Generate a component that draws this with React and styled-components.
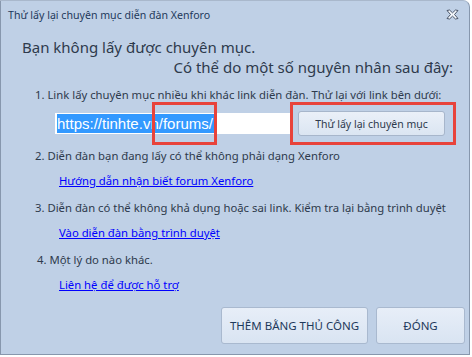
import React from "react";
import styled, { createGlobalStyle } from "styled-components";

const colors = {
  page: "#ffffff",
  window: "#bfd0e6",
  frame: "#8797ad",
  title: "#1e395b",
  text: "#2e3a4c",
  link: "#0000ff",
  red: "#e8433b",
  select: "#3399ff",
};

const GlobalStyle = createGlobalStyle`
  html, body {
    margin: 0;
    padding: 0;
    background: ${colors.page};
  }
  body {
    font-family: "Noto Sans", "Open Sans", sans-serif;
  }
`;

const reasons = [
  {
    text: "1. Link lấy chuyên mục nhiều khi khác link diễn đàn. Thử lại với link bên dưới:",
    retry: true,
  },
  {
    text: "2. Diễn đàn bạn đang lấy có thể không phải dạng Xenforo",
    link: "Hướng dẫn nhận biết forum Xenforo",
  },
  {
    text: "3. Diễn đàn có thể không khả dụng hoặc sai link. Kiểm tra lại bằng trình duyệt",
    link: "Vào diễn đàn bằng trình duyệt",
  },
  {
    text: "4. Một lý do nào khác.",
    link: "Liên hệ để được hỗ trợ",
    indent: 2,
  },
];

const CloseIcon = () => (
  <svg width="13" height="11" viewBox="0 0 13 11">
    <path
      d="M1 1.5 L3.5 1 L6.5 3.8 L9.5 1 L12 1.5 L8.5 5.5 L12 9.5 L9.5 10 L6.5 7.2 L3.5 10 L1 9.5 L4.5 5.5 Z"
      fill="#f4f7fb"
      stroke="#4a5568"
      strokeWidth="1"
      strokeLinejoin="round"
    />
  </svg>
);

const App = () => {
  return (
    <>
      <GlobalStyle />
      <Window>
        <TitleBar>
          <TitleText>Thử lấy lại chuyên mục diễn đàn Xenforo</TitleText>
          <CloseButton type="button">
            <CloseIcon />
          </CloseButton>
        </TitleBar>
        <Body>
          <Heading>Bạn không lấy được chuyên mục.</Heading>
          <SubHeading>Có thể do một số nguyên nhân sau đây:</SubHeading>
          <ReasonList>
            {reasons.map((reason, index) => (
              <Reason key={index}>
                <ReasonText indent={reason.indent}>{reason.text}</ReasonText>
                {reason.retry && (
                  <RetryRow>
                    <UrlBox>
                      <Selected>https://tinhte.vn/forums/</Selected>
                    </UrlBox>
                    <RetryButton type="button">Thử lấy lại chuyên mục</RetryButton>
                    <Highlight style={{ left: 117, width: 65 }} />
                    <Highlight style={{ left: 255, width: 166 }} />
                  </RetryRow>
                )}
                {reason.link && <HelpLink href="#">{reason.link}</HelpLink>}
              </Reason>
            ))}
          </ReasonList>
          <Footer>
            <DialogButton type="button" width={147}>
              THÊM BẰNG THỦ CÔNG
            </DialogButton>
            <DialogButton type="button" width={89}>
              ĐÓNG
            </DialogButton>
          </Footer>
        </Body>
      </Window>
    </>
  );
};

const Window = styled.div`
  width: 470px;
  height: 355px;
  box-sizing: border-box;
  background: ${colors.window};
  border: 1px solid ${colors.frame};
  border-top-color: #a9b8cc;
  border-radius: 0 7px 0 0;
  display: flex;
  flex-direction: column;
`;

const TitleBar = styled.div`
  height: 28px;
  display: flex;
  align-items: center;
  justify-content: space-between;
  padding: 0 10px 0 7px;
`;

const TitleText = styled.span`
  font-size: 10.6px;
  color: ${colors.title};
`;

const CloseButton = styled.button`
  background: transparent;
  border: none;
  padding: 0;
  margin-top: -2px;
  display: flex;
  cursor: pointer;
`;

const Body = styled.div`
  flex: 1;
  display: flex;
  flex-direction: column;
  padding: 8px 4px 10px 21px;
`;

const Heading = styled.div`
  font-size: 15px;
  line-height: 20px;
  color: ${colors.text};
`;

const SubHeading = styled(Heading)`
  align-self: flex-end;
  margin-right: 12px;
`;

const ReasonList = styled.div`
  display: flex;
  flex-direction: column;
  gap: 10px;
  margin-top: 9px;
  padding-left: 13px;
`;

const Reason = styled.div`
  display: flex;
  flex-direction: column;
  gap: 8px;
`;

const ReasonText = styled.div`
  font-size: 11.3px;
  line-height: 17px;
  color: ${colors.text};
  padding-left: ${({ indent }) => indent || 0}px;
`;

const RetryRow = styled.div`
  position: relative;
  display: flex;
  align-items: center;
  gap: 7px;
  padding-left: 20px;
  margin-bottom: 1px;
`;

const UrlBox = styled.div`
  width: 236px;
  height: 21px;
  box-sizing: border-box;
  background: #ffffff;
  padding: 1px 2px;
  display: flex;
`;

const Selected = styled.span`
  background: ${colors.select};
  color: #ffffff;
  font-family: "Liberation Sans", Arial, sans-serif;
  font-size: 15px;
  line-height: 19px;
  padding-right: 1px;
`;

const RetryButton = styled.button`
  width: 147px;
  height: 25px;
  font-family: inherit;
  font-size: 10.5px;
  color: ${colors.text};
  background: linear-gradient(#eaf0f8, #dbe5f2);
  border: 1px solid #a7b6cb;
  border-radius: 3px;
  cursor: pointer;
`;

const Highlight = styled.div`
  position: absolute;
  top: -9px;
  height: 43px;
  box-sizing: border-box;
  border: 3px solid ${colors.red};
  pointer-events: none;
`;

const HelpLink = styled.a`
  font-size: 11.3px;
  line-height: 17px;
  color: ${colors.link};
  text-decoration: underline;
  padding-left: 24px;
`;

const Footer = styled.div`
  margin-top: auto;
  display: flex;
  justify-content: flex-end;
  gap: 8px;
`;

const DialogButton = styled.button`
  width: ${({ width }) => width}px;
  height: 37px;
  font-family: inherit;
  font-size: 11.5px;
  color: ${colors.title};
  background: linear-gradient(#e7eef8, #d9e4f2);
  border: 1px solid #a9b9cf;
  border-radius: 3px;
  cursor: pointer;
`;

export default App;
